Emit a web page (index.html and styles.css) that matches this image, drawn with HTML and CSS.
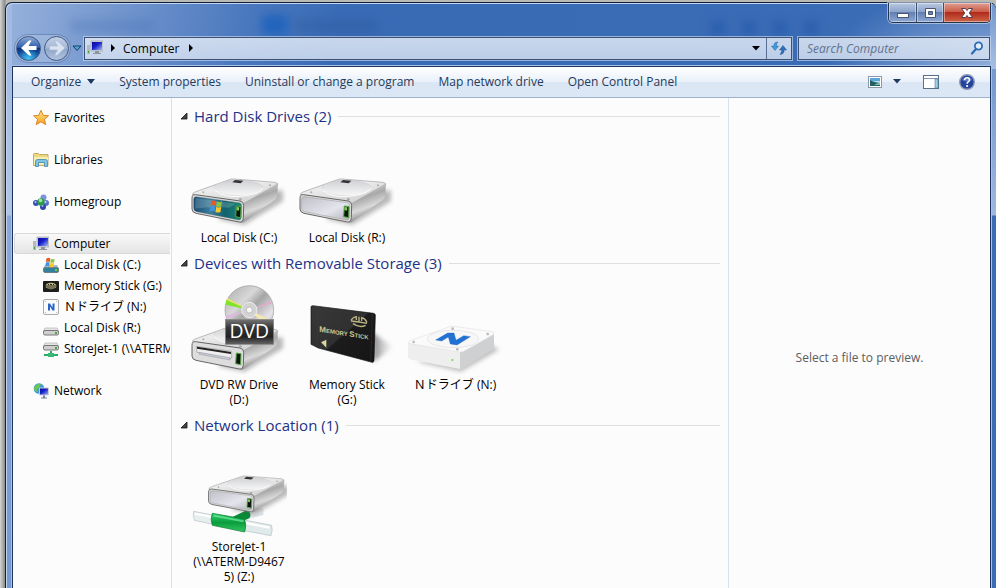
FILE: index.html
```
<!DOCTYPE html>
<html lang="en">
<head>
<meta charset="utf-8">
<title>Computer</title>
<link rel="stylesheet" href="styles.css">
</head>
<body>
<svg class="defs" aria-hidden="true">
  <defs>
    <linearGradient id="metal-top" x1="0" y1="0" x2="0.6" y2="1"><stop offset="0" stop-color="#c9c9c9"/><stop offset=".4" stop-color="#ececec"/><stop offset="1" stop-color="#d2d2d2"/></linearGradient>
    <linearGradient id="metal-side" x1="0" y1="0" x2=".35" y2="1"><stop offset="0" stop-color="#f2f2f2"/><stop offset=".45" stop-color="#a9a9a9"/><stop offset=".7" stop-color="#d9d9d9"/><stop offset="1" stop-color="#777"/></linearGradient>
    <linearGradient id="dish" x1="0" y1="0" x2="0" y2="1"><stop offset="0" stop-color="#d0d1d4"/><stop offset="1" stop-color="#f7f7f8"/></linearGradient>
    <linearGradient id="face" x1="0" y1="0" x2="1" y2="1"><stop offset="0" stop-color="#bfc0c8"/><stop offset=".6" stop-color="#e4e4ec"/><stop offset="1" stop-color="#b4b4bb"/></linearGradient>
    <linearGradient id="face-os" x1="0" y1="0" x2="1" y2="0"><stop offset="0" stop-color="#174a70"/><stop offset=".35" stop-color="#3d7f9b"/><stop offset=".65" stop-color="#12606e"/><stop offset="1" stop-color="#1d8a70"/></linearGradient>
    <linearGradient id="disc" x1="0" y1="0" x2="1" y2="1"><stop offset="0" stop-color="#aaa"/><stop offset=".35" stop-color="#d8d8d8"/><stop offset=".5" stop-color="#a5a5a5"/><stop offset=".75" stop-color="#e6e2e8"/><stop offset="1" stop-color="#b5b5b5"/></linearGradient>
    <linearGradient id="plate" x1="0" y1="0" x2="0" y2="1"><stop offset="0" stop-color="#777"/><stop offset=".35" stop-color="#333"/><stop offset=".7" stop-color="#222"/><stop offset="1" stop-color="#666"/></linearGradient>
    <linearGradient id="card" x1="0" y1="0" x2="1" y2="1"><stop offset="0" stop-color="#383838"/><stop offset=".5" stop-color="#303030"/><stop offset=".52" stop-color="#1c1c1c"/><stop offset="1" stop-color="#151515"/></linearGradient>
    <linearGradient id="screen" x1="0" y1="0" x2="1" y2="1"><stop offset="0" stop-color="#0808a0"/><stop offset=".45" stop-color="#1822c8"/><stop offset="1" stop-color="#a8b8f8"/></linearGradient>
    <linearGradient id="green" x1="0" y1="0" x2="0" y2="1"><stop offset="0" stop-color="#2fd570"/><stop offset=".5" stop-color="#0b9c3c"/><stop offset="1" stop-color="#35c765"/></linearGradient>
    <linearGradient id="gold" x1="0" y1="0" x2="0" y2="1"><stop offset="0" stop-color="#fff08a"/><stop offset="1" stop-color="#f79a1e"/></linearGradient>
    <linearGradient id="shade" x1="0" y1="0" x2="1" y2="0"><stop offset="0" stop-color="#777"/><stop offset="1" stop-color="#bbb" stop-opacity="0"/></linearGradient>
    <filter id="soft" x="-20%" y="-20%" width="140%" height="140%"><feGaussianBlur stdDeviation="7"/></filter>
    <symbol id="windows-flag" viewBox="0 0 36 40">
      <path fill="#e8582b" d="M5 5q7-4 14 0l-2 13q-7-4-14 0z"/>
      <path fill="#8cc43e" d="M21 6q7 4 14 0l-2 13q-7 4-14 0z"/>
      <path fill="#3f94e0" d="M3 20q7-4 14 0l-2 14q-7-4-14 0z"/>
      <path fill="#f8c830" d="M19 21q7 4 14 0l-2 14q-7 4-14 0z"/>
    </symbol>
    <symbol id="drive" viewBox="0 0 288 288">
      <path d="M80 262L160 278L276 208V175L200 180Z" fill="#555" opacity=".4" filter="url(#soft)"/>
      <path d="M5 189Q2 184 12 180L115 143Q121 140 130 141L252 151Q262 153 260 160L160 216Z" fill="url(#metal-top)" stroke="#a0a0a0" stroke-width="2"/>
      <path d="M156 215L260 155L259 192Q259 199 252 204L160 269Q154 273 148 271Z" fill="url(#metal-side)" stroke="#aaa" stroke-width="1"/>
      <ellipse cx="143" cy="168" rx="74" ry="23" fill="url(#dish)" stroke="#c3c3c3" stroke-width="1"/>
      <path d="M70 174Q100 201 165 191Q210 184 217 168" fill="none" stroke="#fff" stroke-width="3"/>
      <path d="M132 144l25 2-8 8-25-3z" fill="#333"/>
      <circle cx="37" cy="181" r="3" fill="#aaa"/><circle cx="148" cy="202" r="4" fill="#aaa"/><circle cx="237" cy="160" r="3" fill="#aaa"/>
      <path d="M13 188L147 207Q158 209 158 220L157 257Q156 272 145 270L15 244Q3 241 3 231L3 199Q3 187 13 188Z" fill="#ddd" stroke="#666" stroke-width="3"/>
    </symbol>
    <symbol id="drive-face" viewBox="0 0 288 288">
      <path d="M16 194L144 212Q152 213 152 221L151 255Q150 266 143 264L17 239Q8 237 8 228L8 202Q8 193 16 194Z" stroke="#777" stroke-width="1"/>
      <path d="M136 222l14 2-1 33-15-3z" fill="#0c180f" stroke="#57a844" stroke-width="3"/>
      <path d="M138 225l7 1-1 10-8-2z" fill="#86c75f"/>
    </symbol>
    <symbol id="hard-disk" viewBox="0 0 288 288">
      <use href="#drive"/><use href="#drive-face" fill="url(#face)"/>
    </symbol>
    <symbol id="monitor" viewBox="0 0 16 16">
      <path d="M0 5h3v9H0z" fill="#b4bac0"/><path d="M1 11h1v2H1z" fill="#37a63a"/>
      <path d="M4 1h12v10H4z" fill="#d4d8dc" stroke="#9299a1" stroke-width=".6"/><path d="M5 2h10v8H5z" fill="url(#screen)"/>
      <path d="M8 11h4v2h2v1H6v-1h2z" fill="#8d949c"/>
    </symbol>
    <symbol id="small-drive" viewBox="0 0 16 16">
      <path d="M2 7h12l2 4H0z" fill="#e6e6e6" stroke="#aaa" stroke-width=".6"/><rect x=".5" y="9.500" width="15" height="4.500" rx="1.500" fill="#cfcfcf" stroke="#777"/><path d="M12 11h2v2h-2z" fill="#49a83b"/>
    </symbol>
  </defs>
</svg>

<div class="window">
  <div class="ghost ghost-tab" aria-hidden="true"></div>
  <div class="ghost ghost-mark" aria-hidden="true"></div>
  <div class="ghost ghost-word" aria-hidden="true"></div>
  <div class="ghost ghost-tools" aria-hidden="true"></div>

  <div class="caption">
    <button class="cap" type="button" aria-label="Minimize"><svg width="14" height="12" viewBox="0 0 14 12"><rect x="1.500" y="6.500" width="11" height="4" fill="#fff" stroke="#4a5672"/></svg></button>
    <button class="cap cap-max" type="button" aria-label="Maximize"><svg width="13" height="12" viewBox="0 0 13 12"><path fill="#fff" stroke="#4a5672" fill-rule="evenodd" d="M1.500 1.500h10v9h-10zM4.500 4.500v3h4v-3z"/></svg></button>
    <button class="cap cap-close" type="button" aria-label="Close"><svg width="14" height="12" viewBox="0 0 14 12"><path fill="#fff" stroke="#5b3a48" d="M1.500 1.500h4L7 3.500l1.500-2h4L9.300 6l3.200 4.500h-4L7 8.500l-1.500 2h-4L4.700 6z"/></svg></button>
  </div>

  <div class="navbar">
    <div class="travel">
      <button class="round back" type="button" aria-label="Back"><svg width="18" height="16" viewBox="0 0 18 16"><path fill="#fff" d="M1 8l8-7.500h2.500L8.500 6H16.500v4H8.500l3 5.500H9z"/></svg></button>
      <button class="round forward" type="button" aria-label="Forward"><svg width="18" height="16" viewBox="0 0 18 16"><path fill="#d9e2f0" stroke="#a3b4cf" stroke-width=".5" d="M17 8L9 .5H6.500L9.500 6H1.500v4h8l-3 5.500H9z"/></svg></button>
    </div>
    <button class="recent" type="button" aria-label="Recent pages"><svg width="10" height="7" viewBox="0 0 10 7"><path d="M1 1h8L5 5.500z" fill="#5aa4d4" stroke="#123c6b"/></svg></button>
    <div class="address">
      <svg class="address-icon" width="16" height="16"><use href="#monitor"/></svg>
      <svg width="6" height="8" viewBox="0 0 6 8"><path d="M1 0l4 4-4 4z"/></svg>
      <a class="crumb" href="#computer">Computer</a>
      <svg width="6" height="8" viewBox="0 0 6 8"><path d="M1 0l4 4-4 4z"/></svg>
      <button class="history" type="button" aria-label="Previous locations"><svg width="8" height="5" viewBox="0 0 8 5"><path d="M0 0h8L4 4.500z"/></svg></button>
      <button class="refresh" type="button" aria-label="Refresh"><svg width="16" height="14" viewBox="0 0 16 14"><path d="M7 1Q2.500 1 3 5H.5L4 9.500 7.500 5H5.300Q5 2.800 7 1Z" fill="#3c9bd8" stroke="#2a69a5" stroke-width=".5"/><path d="M9 13.500Q13.500 13 13 9h2.500L12 4.500 8.500 9h2.200Q11 11.500 9 13.500Z" fill="#2f6fb8" stroke="#215891" stroke-width=".5"/></svg></button>
    </div>
    <form class="search">
      <input type="text" aria-label="Search Computer" placeholder="Search Computer">
      <button class="plain" type="button" aria-label="Search"><svg width="14" height="14" viewBox="0 0 14 14"><circle cx="8.500" cy="5" r="3.600" fill="#e3edf9" stroke="#2c6cb4" stroke-width="1.800"/><path d="M6 8L2 12.500" stroke="#2c6cb4" stroke-width="2.200" stroke-linecap="round"/></svg></button>
    </form>
  </div>

  <div class="client">
    <div class="toolbar">
      <button type="button">Organize <svg width="8" height="5" viewBox="0 0 8 5"><path d="M0 0h8L4 5z" fill="#1e3a5c"/></svg></button>
      <button type="button">System properties</button>
      <button type="button">Uninstall or change a program</button>
      <button type="button">Map network drive</button>
      <button type="button">Open Control Panel</button>
      <div class="views">
        <button class="plain" type="button" aria-label="Change your view"><svg width="14" height="12" viewBox="0 0 14 12"><rect x=".5" y=".5" width="13" height="11" fill="#fff" stroke="#8b99ab"/><path fill="#5aa6d9" d="M2 2h10v4H2z"/><path fill="#b9ddec" d="M2 5h10v2H2z"/><path fill="#205f63" d="M2 4q3 2 10 3v3H2z"/><path fill="#8cbfb4" d="M6 9q3-2 6-2v2z"/></svg></button>
        <button class="plain" type="button" aria-label="More view options"><svg width="8" height="5" viewBox="0 0 8 5"><path d="M0 0h8L4 4.500z" fill="#1e3a5c"/></svg></button>
        <button class="plain preview-toggle" type="button" aria-label="Hide the preview pane"><svg width="16" height="14" viewBox="0 0 16 14"><rect x=".5" y=".5" width="15" height="13" fill="#fff" stroke="#5a6f88"/><path d="M1 3.500h14" stroke="#8497ab"/><path d="M12 4h3v9h-3z" fill="#9fd0e4" stroke="#4b7f98" stroke-width=".6"/></svg></button>
        <button class="plain" type="button" aria-label="Get help"><svg width="16" height="16" viewBox="0 0 16 16"><circle cx="8" cy="8" r="7.300" fill="#26439c" stroke="#8d99b6" stroke-width="1.400"/><path d="M3 6a5.500 5 0 0 1 10 0q-5 3-10 0" fill="#5d7fca"/><path d="M5.600 6Q5.800 3.800 8.100 3.800T10.500 6Q10.500 7.200 8.900 8.100 8.100 8.600 8.100 9.700" fill="none" stroke="#fff" stroke-width="1.600"/><circle cx="8.100" cy="12" r="1.100" fill="#fff"/></svg></button>
      </div>
    </div>

    <div class="panes">
      <nav class="tree">
        <a href="#favorites"><svg width="16" height="16" viewBox="0 0 16 16"><path d="M8 .3l2.200 5 5.300.5-4 3.500 1.200 5.300L8 11.800 3.300 14.600l1.200-5.300-4-3.500 5.300-.5z" fill="url(#gold)" stroke="#dd7a1b" stroke-width=".9"/></svg>Favorites</a>
        <a href="#libraries"><svg width="16" height="16" viewBox="0 0 16 16"><path d="M.5 2.500q0-1 1-1h4l1 1H15v11H.500z" fill="#ecd680" stroke="#b59b4a" stroke-width=".8"/><path d="M1 5h14v8H1z" fill="#f8eeae"/><path d="M2.500 14.500v-5q0-2 2-2h8q2 0 2 2v5h-3v-4h-6v4z" fill="#7fc4e4" stroke="#3f87ad" stroke-width=".8"/></svg>Libraries</a>
        <a href="#homegroup"><svg width="16" height="16" viewBox="0 0 16 16"><circle cx="10.500" cy="3.500" r="3" fill="#7c92dc"/><circle cx="3" cy="9" r="3" fill="#3452b6"/><circle cx="13" cy="9" r="3" fill="#5873ca"/><circle cx="10" cy="13" r="3" fill="#2f48a8"/><circle cx="8" cy="8" r="3.700" fill="#2e9c49"/><circle cx="7.500" cy="6.500" r="1.800" fill="#a8e2a0"/><circle cx="2.500" cy="8" r="1" fill="#b8c8f4"/><circle cx="12.500" cy="8" r="1" fill="#d0dbfa"/><circle cx="9.500" cy="12" r="1" fill="#a0b2ec"/></svg>Homegroup</a>
        <div class="branch">
          <a class="selected" href="#computer"><svg width="16" height="16"><use href="#monitor"/></svg>Computer</a>
          <a class="child" href="#c"><svg width="16" height="16" viewBox="0 0 16 16"><path d="M2 8h12l2 4H0z" fill="#9fb9c8"/><rect x=".5" y="10.500" width="15" height="5" rx="1.500" fill="#33809a" stroke="#6d7f8a"/><path d="M12 12h2v2h-2z" fill="#64d04c"/><use href="#windows-flag" x="2" y="0" width="10" height="11"/></svg>Local Disk (C:)</a>
          <a class="child" href="#g"><svg width="16" height="16" viewBox="0 0 16 16"><rect y="3" width="16" height="11" rx="1" fill="#1d1d1b"/><ellipse cx="8" cy="8" rx="5.500" ry="3.300" fill="#c6bd8a"/><path d="M2 8h12M4 10h8" stroke="#26251e"/><path d="M5 6h1v1H5zm2 0h2v1H7zm3 0h1v1h-1z" fill="#26251e"/></svg>Memory Stick (G:)</a>
          <a class="child" href="#n" lang="ja"><svg width="16" height="16" viewBox="0 0 16 16"><rect x=".5" y=".5" width="15" height="15" rx="1.500" fill="#fafafa" stroke="#a9abad"/><path d="M5 11.500v-7h2l2.500 4v-4h2v7h-2l-2.500-4v4z" fill="#2b64c8"/><path d="M2 2h1v1H2zm11 0h1v1h-1zM2 13h1v1H2zm11 0h1v1h-1z" fill="#bbb"/></svg>Ｎドライブ (N:)</a>
          <a class="child" href="#r"><svg width="16" height="16"><use href="#small-drive" y="1"/></svg>Local Disk (R:)</a>
          <a class="child" href="#z"><svg width="16" height="16" viewBox="0 0 16 16"><use href="#small-drive" y="-5" width="16" height="16"/><path d="M7 10h2v3h6v2H1v-2h6z" fill="#2bab66"/><path d="M5 12h6v4H5z" fill="#38b978"/></svg>StoreJet-1 (\\ATERM-D94675) (Z:)</a>
        </div>
        <a href="#network"><svg width="16" height="16" viewBox="0 0 16 16"><circle cx="6" cy="5.500" r="5.300" fill="#3c9ad8"/><path d="M2 3q3-3 6-2L6 5 4 6l1 3Q1 8 1 5z" fill="#6cc652"/><path d="M6.500 5h9v7h-9z" fill="url(#screen)" stroke="#c6cdd6"/><path d="M10 12.500h2v2h2v1H8v-1h2z" fill="#6f7f98"/></svg>Network</a>
      </nav>

      <main class="files">
        <section>
          <h2><svg width="8" height="8" viewBox="0 0 8 8"><path d="M7 1v6H1z" fill="#444" stroke="#111" stroke-width=".8"/></svg>Hard Disk Drives (2)</h2>
          <ul>
            <li><a href="#c"><svg viewBox="0 0 288 288"><use href="#drive"/><use href="#drive-face" fill="url(#face-os)"/><path d="M14 198l120 17-20 12Q60 222 12 230z" fill="#fff" opacity=".17"/><use href="#windows-flag" x="55" y="202" width="39" height="43"/></svg>Local Disk (C:)</a></li>
            <li><a href="#r"><svg viewBox="0 0 288 288"><use href="#hard-disk"/></svg>Local Disk (R:)</a></li>
          </ul>
        </section>
        <section>
          <h2><svg width="8" height="8" viewBox="0 0 8 8"><path d="M7 1v6H1z" fill="#444" stroke="#111" stroke-width=".8"/></svg>Devices with Removable Storage (3)</h2>
          <ul>
            <li><a href="#d"><svg viewBox="0 0 288 288"><use href="#drive"/><path d="M16 202L122 217V237L110 238 18 220Z" fill="#eee" stroke="#999" stroke-width="2"/><path d="M18 203l102 16v6L18 209z" fill="#222"/><path d="M25 220l92 16v7l-92-17z" fill="#c5c9d5" stroke="#777"/><path d="M136 222l14 2-1 33-15-3z" fill="#0c180f" stroke="#57a844" stroke-width="3"/><circle cx="175" cy="93" r="73" fill="url(#disc)" stroke="#999" stroke-width="2"/><path d="M175 93L106 62l-3 15z" fill="#7ee52c"/><path d="M175 93L106 62l3-5z" fill="#e9e45a"/><path d="M175 93l66-26 3 6z" fill="#e7aacd"/><path d="M175 93l65 30-14 20z" fill="#f3e7b4"/><path d="M175 93L104 110l3 10z" fill="#dfb8df"/><circle cx="175" cy="93" r="23" fill="#d2d2d2" stroke="#eee" stroke-width="3"/><circle cx="175" cy="93" r="9" fill="#fafafa" stroke="#aaa" stroke-width="2"/><rect x="103" y="121" width="145" height="75" fill="url(#plate)" stroke="#888" stroke-width="2"/><text class="dvd" x="175" y="176">DVD</text></svg>DVD RW Drive (D:)</a></li>
            <li><a href="#g"><svg viewBox="0 0 288 288"><path d="M218 160L284 203L224 248Z" fill="url(#shade)" filter="url(#soft)"/><path d="M36 84q0-4 5-4l183 23q5 1 5 6l-4 136q-1 6-6 5L58 207 36 196z" fill="url(#card)" stroke="#111" stroke-width="2"/><path d="M55 83v121" stroke="#444"/><path d="M220 104l-5 145" stroke="#4a4a4a"/><g fill="none" stroke="#b9b184" stroke-width="4"><path d="M156 124q6-10 16-11v10M204 130q-6-12-16-14v10M180 113v14M156 126q24 2 48 7M162 134q20 14 38 5"/></g><text class="stick" transform="matrix(1 .16 0 1 61 158)"><tspan class="stick-cap">M</tspan>EMORY <tspan class="stick-cap">S</tspan>TICK</text><path d="M82 182v24l-16-16z" fill="#ddd6a3"/></svg>Memory Stick (G:)</a></li>
            <li><a href="#n" lang="ja"><svg viewBox="0 0 288 288"><path d="M30 248L162 278 276 212 240 190Z" fill="#666" opacity=".4" filter="url(#soft)"/><path d="M3 190L159 218V270L14 242Q3 239 3 233Z" fill="#eeeeef"/><path d="M159 218L261 161V205Q260 210 254 214L168 268Q163 271 159 270Z" fill="#cfd0d2"/><path d="M5 193Q0 189 9 185L128 143Q133 141 140 142L255 158Q267 161 258 167L170 217Q164 220 156 219Z" fill="#fafafa" stroke="#e2e2e3" stroke-width="2"/><ellipse cx="138" cy="180" rx="77" ry="26" fill="#f7f7f8" stroke="#dededf" stroke-width="2"/><path d="M86 183L122 162H141L147 184 170 170 190 173 150 198 130 195 124 174 104 186Z" fill="#2272d4" stroke="#1558b0"/><g fill="#b8b9bc"><circle cx="20" cy="189" r="4"/><circle cx="137" cy="149" r="4"/><circle cx="242" cy="165" r="4"/><circle cx="151" cy="211" r="4"/></g><circle cx="136" cy="243" r="3" fill="#77d052"/></svg>Ｎドライブ (N:)</a></li>
          </ul>
        </section>
        <section>
          <h2><svg width="8" height="8" viewBox="0 0 8 8"><path d="M7 1v6H1z" fill="#444" stroke="#111" stroke-width=".8"/></svg>Network Location (1)</h2>
          <ul>
            <li><a href="#z"><svg viewBox="0 0 288 288"><path d="M155 205l62-3v20l-45 12z" fill="#dde2e5"/><path d="M128 240L166 222" stroke="#0b8a38" stroke-width="25" stroke-linecap="round"/><use href="#hard-disk" transform="matrix(.88 0 0 .83 50 -12)"/><path d="M8 211L66 222V250L10 238Q5 225 8 211Z" fill="#e6eeee" stroke="#b3c1c2" stroke-width="2"/><path d="M12 218l52 10" stroke="#fff" stroke-width="6"/><path d="M155 236L242 253Q246 268 240 284L155 268Z" fill="#e1eaea" stroke="#afbfc0" stroke-width="2"/><path d="M165 246l70 14" stroke="#fff" stroke-width="7"/><path d="M64 217L160 234Q168 252 161 273L64 253Q57 235 64 217Z" fill="url(#green)" stroke="#08752d" stroke-width="2"/><path d="M68 224l90 17" stroke="#77eaa0" stroke-width="5" opacity=".7"/></svg><span>StoreJet-1 <span class="path">(\\ATERM-D94675) (Z:)</span></span></a></li>
          </ul>
        </section>
      </main>

      <aside class="preview">Select a file to preview.</aside>
    </div>
  </div>
</div>
</body>
</html>
```
FILE: styles.css
```
* { box-sizing: border-box; }

html, body { height: 100%; }

body {
  margin: 0;
  padding: 2px 0 0 5px;
  overflow: hidden;
  background: linear-gradient(90deg, #d4d4d2, #8a8a88 5px, #b9bab4 6px);
  font: 12px/15px "Open Sans", "Noto Sans CJK JP", sans-serif;
  color: #000;
}

.defs { position: absolute; width: 0; height: 0; }

a { color: inherit; text-decoration: none; }

svg { flex: none; display: block; }

button {
  margin: 0;
  padding: 0;
  border: 0;
  background: none;
  font: inherit;
  color: inherit;
  display: flex;
  align-items: center;
  justify-content: center;
}

.window {
  position: relative;
  height: 100%;
  display: flex;
  flex-direction: column;
  padding: 0 5px 0 6px;
  border: solid #10203c;
  border-width: 1px 0 0 1px;
  border-radius: 7px 7px 0 0;
  box-shadow: inset 1px 1px 0 #c3d5ee;
  background:
    linear-gradient(rgba(190, 208, 236, .3), rgba(190, 208, 236, .75) 212px, transparent 213px) 0 0 / 6px 100% no-repeat,
    linear-gradient(rgba(190, 208, 236, .3), rgba(190, 208, 236, .75) 212px, transparent 213px) 100% 0 / 6px 100% no-repeat,
    radial-gradient(ellipse 170px 90px at 100% 70px, rgba(190, 208, 236, .7), transparent) 100% 0 / 240px 66px no-repeat,
    linear-gradient(100deg, #96b1dc, #7799cf 100px, #4a78be 240px, #396bb5 330px, #3b6cb6);
}

.ghost { position: absolute; filter: blur(5px); }
.ghost-tab { left: 64px; top: 17px; width: 84px; height: 12px; background: rgba(73, 113, 180, .35); }
.ghost-mark { left: 256px; top: 12px; width: 26px; height: 20px; background: #2265bd; }
.ghost-word { left: 290px; top: 16px; width: 82px; height: 14px; background: rgba(44, 85, 153, .35); }
.ghost-tools { left: 705px; top: 18px; width: 110px; height: 14px; background: repeating-linear-gradient(90deg, rgba(27, 83, 167, .5) 0 14px, transparent 14px 31px); }

.caption {
  position: relative;
  align-self: flex-end;
  display: flex;
  height: 20px;
  border: 1px solid #26354f;
  border-top: 0;
  border-radius: 0 0 5px 5px;
  overflow: hidden;
  box-shadow: 0 0 0 1px rgba(210, 224, 245, .6);
}
.cap {
  width: 28px;
  background: linear-gradient(#b9c8e0, #8ea5cb 45%, #6380b3 50%, #8ea9d3);
  border-right: 1px solid #3c4f72;
  box-shadow: inset 0 0 0 1px rgba(255, 255, 255, .4);
}
.cap-max { width: 27px; }
.cap-close {
  width: 46px;
  border: 0;
  background: linear-gradient(#dea093, #cc5d49 45%, #b12a1b 50%, #cc6546);
}

.navbar {
  position: relative;
  display: flex;
  align-items: center;
  height: 43px;
  padding: 7px 1px 0 0;
}
.travel {
  display: flex;
  gap: 3px;
  margin-left: 3px;
  padding: 1px;
  border-radius: 14px;
  background: rgba(178, 198, 229, .45);
  box-shadow: 0 0 0 1px rgba(60, 88, 135, .35);
}
.round {
  width: 25px;
  height: 25px;
  border-radius: 50%;
  border: 1px solid #43597e;
}
.back { background: radial-gradient(circle at 50% 95%, #3fc4f4, transparent 45%), linear-gradient(#8ca8d4, #2c5fae 45%, #0c3784 50%, #1a67b8); }
.forward { background: linear-gradient(#c3d1e8, #a5b8d6 48%, #8ea6cb 52%, #b2c4de); }
.recent { width: 14px; height: 22px; }

.address, .search {
  display: flex;
  align-items: center;
  height: 23px;
  border: 1px solid #3c5174;
  box-shadow: 0 0 0 1px rgba(201, 217, 241, .65);
  background: linear-gradient(rgba(226, 234, 246, .85), rgba(211, 223, 241, .85));
}
.address { flex: 1; gap: 7px; padding-left: 2px; }
.crumb { margin-right: 1px; }
.history { width: 20px; height: 100%; margin-left: auto; }
.refresh { width: 25px; height: 100%; margin-left: -7px; border-left: 1px solid #5a6f93; }
.search { width: 192px; margin-left: 6px; padding: 0 5px 0 8px; }
.search input {
  flex: 1;
  min-width: 0;
  padding: 0;
  border: 0;
  outline: 0;
  background: none;
  font: italic 12px/15px "Open Sans", sans-serif;
}
.search input::placeholder { color: #63718a; opacity: 1; }

.client {
  position: relative;
  flex: 1;
  min-height: 0;
  display: flex;
  flex-direction: column;
  border: solid #1d3461;
  border-width: 1px 1px 0;
  box-shadow: 0 0 0 1px #a9c3e8;
  background: #fcfcfc;
}
.toolbar {
  display: flex;
  align-items: center;
  gap: 24px;
  height: 31px;
  padding: 0 15px 1px 18px;
  color: #1e3a5c;
  border-bottom: 1px solid #a0b3cd;
  background: linear-gradient(#fff, #e9f0fa 50%, #dbe6f4 52%, #dce7f5);
}
.toolbar button { gap: 6px; white-space: nowrap; }
.views { display: flex; align-items: center; margin-left: auto; gap: 11px; }
.preview-toggle { margin: 0 9px 0 11px; }

.panes { flex: 1; min-height: 0; display: flex; }
.tree {
  width: 159px;
  padding: 9px 1px 0;
  display: flex;
  flex-direction: column;
  gap: 21px;
  border-right: 1px solid #d6e1f1;
  overflow: hidden;
}
.tree a {
  display: flex;
  align-items: center;
  gap: 5px;
  height: 21px;
  padding-left: 19px;
  white-space: nowrap;
  overflow: hidden;
}
.tree .child { padding-left: 29px; }
.tree .selected {
  padding-left: 18px;
  border: 1px solid #d9d9d9;
  border-right: 0;
  border-radius: 3px 0 0 3px;
  background: linear-gradient(#f8f8f8, #e5e5e5);
}

.files { flex: 1; min-width: 0; padding: 6px 8px 0 7px; }
h2 {
  display: flex;
  align-items: center;
  height: 24px;
  margin: 0;
  font-size: 15px;
  line-height: 24px;
  font-weight: 400;
  color: #1e3287;
}
h2 svg { margin: 0 6px 0 1px; }
h2::after { content: ""; flex: 1; height: 1px; margin-left: 7px; background: #dedfe1; }
.files ul { display: flex; margin: 0; padding: 4px 0 6px 6px; list-style: none; }
.files li { width: 108px; }
.files li a {
  display: flex;
  flex-direction: column;
  align-items: center;
  gap: 2px;
  padding: 0 6px;
  text-align: center;
}
.files li svg { width: 96px; height: 96px; }
.path { display: block; word-break: break-all; }
.dvd { font: 58px "Open Sans", sans-serif; fill: #fff; text-anchor: middle; }
.stick { font: bold 18px "Liberation Sans", sans-serif; fill: #cfc898; }
.stick-cap { font-size: 24px; }

.preview {
  width: 262px;
  display: flex;
  align-items: center;
  justify-content: center;
  padding-top: 29px;
  border-left: 1px solid #d6e1f1;
  color: #5d5d5d;
}
```
